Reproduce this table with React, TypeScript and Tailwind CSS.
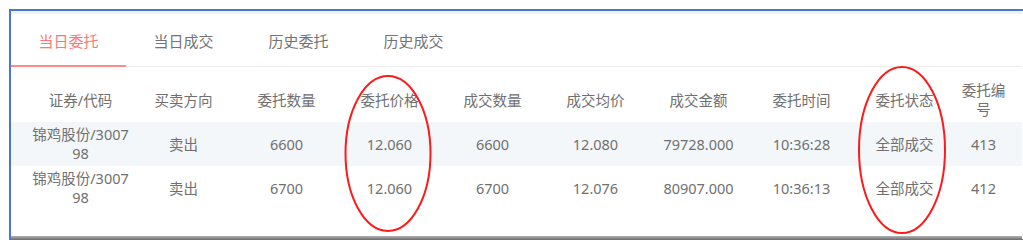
const tabs = ["当日委托", "当日成交", "历史委托", "历史成交"];

const headers = [
  "证券/代码",
  "买卖方向",
  "委托数量",
  "委托价格",
  "成交数量",
  "成交均价",
  "成交金额",
  "委托时间",
  "委托状态",
];

interface OrderRow {
  name: string;
  code: string;
  side: string;
  qty: string;
  price: string;
  dealQty: string;
  avg: string;
  amount: string;
  time: string;
  status: string;
  id: string;
}

const rows: OrderRow[] = [
  {
    name: "锦鸡股份/3007",
    code: "98",
    side: "卖出",
    qty: "6600",
    price: "12.060",
    dealQty: "6600",
    avg: "12.080",
    amount: "79728.000",
    time: "10:36:28",
    status: "全部成交",
    id: "413",
  },
  {
    name: "锦鸡股份/3007",
    code: "98",
    side: "卖出",
    qty: "6700",
    price: "12.060",
    dealQty: "6700",
    avg: "12.076",
    amount: "80907.000",
    time: "10:36:13",
    status: "全部成交",
    id: "412",
  },
];

export default function App() {
  return (
    <div className="relative h-[246px] w-[1023px] overflow-hidden bg-white font-['Noto_Sans','Noto_Sans_CJK_SC',sans-serif]">
      <div className="ml-[9px] mt-[9px] flex h-[231px] flex-col border-b border-l-2 border-t-2 border-[#4a78cc]">
        <div className="flex w-[1011px] flex-1 flex-col">
          <div className="h-[3px] bg-[#f3f3f3]" />

          {/* tabs */}
          <div className="flex border-b border-[#ededed]">
            {tabs.map((t, i) => (
              <div
                key={t}
                className={
                  i === 0
                    ? "-mb-px flex h-[53px] w-[115px] items-center justify-center border-b-2 border-[#ff8a8a] pt-[3px] text-[15px] text-[#ff7575]"
                    : "-mb-px flex h-[53px] w-[115px] items-center justify-center border-b-2 border-transparent pt-[3px] text-[15px] text-[#737373]"
                }
              >
                {t}
              </div>
            ))}
          </div>

          {/* table */}
          <div className="pl-[18px] text-[14.5px] leading-[19px] text-[#707070]">
            <div className="grid h-[55px] grid-cols-[repeat(9,103px)_55px] items-center pt-[11px]">
              {headers.map((h) => (
                <div key={h} className="whitespace-nowrap text-center">
                  {h}
                </div>
              ))}
              <div className="text-center">
                <div>委托编</div>
                <div>号</div>
              </div>
            </div>

            {rows.map((r, i) => (
              <div
                key={r.id}
                className={
                  i === 0
                    ? "-ml-[18px] grid h-[44px] grid-cols-[18px_repeat(9,103px)_55px] items-center bg-[#f4f7fa]"
                    : "-ml-[18px] grid h-[44px] grid-cols-[18px_repeat(9,103px)_55px] items-center"
                }
              >
                <div />
                <div className="text-center">
                  <div className="whitespace-nowrap">{r.name}</div>
                  <div>{r.code}</div>
                </div>
                <div className="text-center">{r.side}</div>
                <div className="text-center">{r.qty}</div>
                <div className="text-center">{r.price}</div>
                <div className="text-center">{r.dealQty}</div>
                <div className="text-center">{r.avg}</div>
                <div className="text-center">{r.amount}</div>
                <div className="text-center">{r.time}</div>
                <div className="text-center">{r.status}</div>
                <div className="text-center">{r.id}</div>
              </div>
            ))}
          </div>

          <div className="mt-auto h-[3px] bg-gradient-to-b from-[#b4b4b4] to-[#7c7c7c]" />
        </div>
      </div>

      {/* hand-drawn annotation circles */}
      <svg
        className="pointer-events-none absolute left-0 top-0"
        width="1023"
        height="246"
        viewBox="0 0 1023 246"
      >
        <ellipse cx="388" cy="153.5" rx="42.5" ry="77.5" fill="none" stroke="#ff1a1a" strokeWidth="2" />
        <ellipse cx="902" cy="150" rx="43" ry="83" fill="none" stroke="#ff1a1a" strokeWidth="2" />
      </svg>
    </div>
  );
}
